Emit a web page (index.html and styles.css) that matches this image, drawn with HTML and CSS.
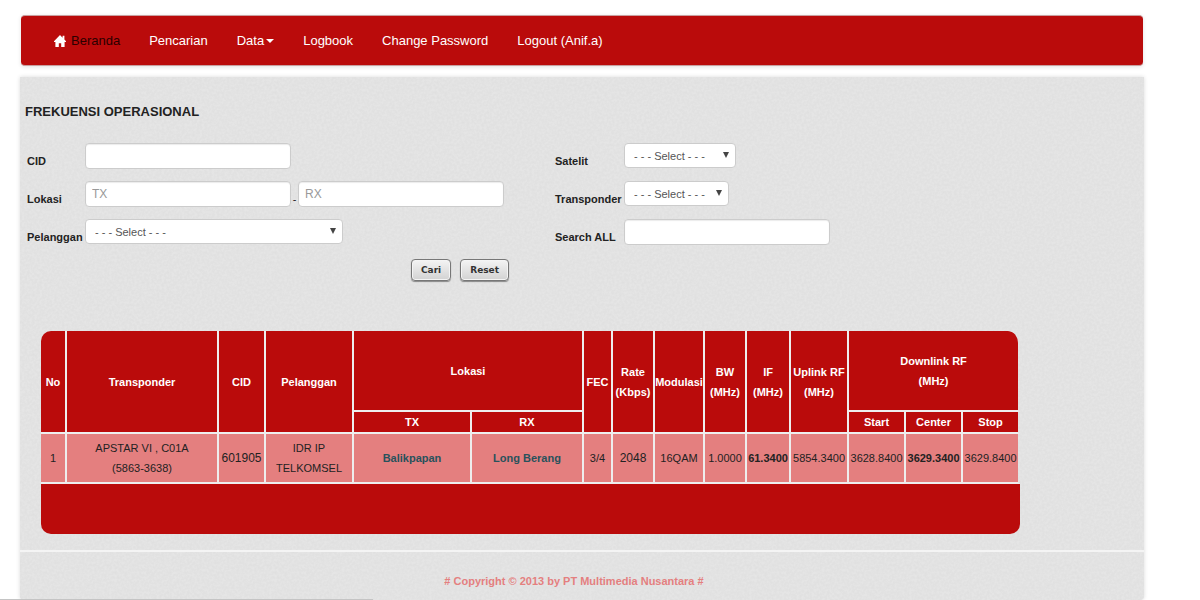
FILE: index.html
```html
<!DOCTYPE html>
<html lang="id">
<head>
<meta charset="utf-8">
<title>Frekuensi Operasional</title>
<link rel="stylesheet" href="styles.css">
</head>
<body>
<nav class="navbar">
  <a class="nav-link active" href="#">
    <svg class="home" viewBox="0 0 12 12" aria-hidden="true"><path d="M6 0 L8.6 2.7 V.8 H10.4 V4.6 L12 6.3 V7 H10.6 V12 H7.2 V8.2 H4.8 V12 H1.4 V7 H0 V6.3 Z"/></svg>
    Beranda</a>
  <a class="nav-link" href="#">Pencarian</a>
  <a class="nav-link dropdown" href="#">Data<span class="caret"></span></a>
  <a class="nav-link" href="#">Logbook</a>
  <a class="nav-link" href="#">Change Password</a>
  <a class="nav-link" href="#">Logout (Anif.a)</a>
</nav>

<main class="panel">
  <h1 class="title">FREKUENSI OPERASIONAL</h1>

  <form class="search">
    <div class="fields">
      <label class="label" for="cid">CID</label>
      <div class="control"><input class="text" id="cid" type="text"></div>
      <label class="label" for="satelit">Satelit</label>
      <div class="control"><select class="select medium" id="satelit"><option>- - - Select - - -</option></select></div>

      <label class="label" for="tx">Lokasi</label>
      <div class="control">
        <input class="text" id="tx" type="text" placeholder="TX">
        <span class="dash">-</span>
        <input class="text" type="text" placeholder="RX" aria-label="RX">
      </div>
      <label class="label" for="transponder">Transponder</label>
      <div class="control"><select class="select small" id="transponder"><option>- - - Select - - -</option></select></div>

      <label class="label" for="pelanggan">Pelanggan</label>
      <div class="control"><select class="select large" id="pelanggan"><option>- - - Select - - -</option></select></div>
      <label class="label" for="all">Search ALL</label>
      <div class="control"><input class="text" id="all" type="text"></div>
    </div>
    <div class="actions">
      <button class="button" type="button">Cari</button>
      <button class="button" type="reset">Reset</button>
    </div>
  </form>

  <table class="grid">
    <colgroup>
      <col class="w-no"><col class="w-transponder"><col class="w-cid"><col class="w-pelanggan">
      <col class="w-tx"><col class="w-rx"><col class="w-fec"><col class="w-rate"><col class="w-mod">
      <col class="w-bw"><col class="w-if"><col class="w-uplink">
      <col class="w-down"><col class="w-down"><col class="w-down">
    </colgroup>
    <thead>
      <tr class="head-main">
        <th rowspan="2" class="first">No</th>
        <th rowspan="2">Transponder</th>
        <th rowspan="2">CID</th>
        <th rowspan="2">Pelanggan</th>
        <th colspan="2">Lokasi</th>
        <th rowspan="2">FEC</th>
        <th rowspan="2">Rate<br>(Kbps)</th>
        <th rowspan="2">Modulasi</th>
        <th rowspan="2">BW<br>(MHz)</th>
        <th rowspan="2">IF<br>(MHz)</th>
        <th rowspan="2">Uplink RF<br>(MHz)</th>
        <th colspan="3" class="last">Downlink RF<br>(MHz)</th>
      </tr>
      <tr class="head-sub">
        <th>TX</th><th>RX</th><th>Start</th><th>Center</th><th class="last">Stop</th>
      </tr>
    </thead>
    <tbody>
      <tr class="row">
        <td>1</td>
        <td>APSTAR VI , C01A<br>(5863-3638)</td>
        <td class="code">601905</td>
        <td>IDR IP<br>TELKOMSEL</td>
        <td><a class="place" href="#">Balikpapan</a></td>
        <td><a class="place" href="#">Long Berang</a></td>
        <td>3/4</td>
        <td class="code">2048</td>
        <td>16QAM</td>
        <td>1.0000</td>
        <td class="strong">61.3400</td>
        <td>5854.3400</td>
        <td>3628.8400</td>
        <td class="strong">3629.3400</td>
        <td class="last">3629.8400</td>
      </tr>
    </tbody>
    <tfoot>
      <tr><td class="foot" colspan="15"></td></tr>
    </tfoot>
  </table>

  <footer class="copyright"># Copyright © 2013 by PT Multimedia Nusantara #</footer>
</main>
<div class="status"></div>
</body>
</html>
```
FILE: styles.css
```css
* { box-sizing: border-box; }

body {
  margin: 0;
  padding: 15px 56px 0 20px;
  background: #fff;
  color: #222;
  font: 11px/20px "Liberation Sans", Arial, sans-serif;
  overflow: hidden;
}

.navbar {
  display: flex;
  align-items: center;
  gap: 29px;
  height: 51px;
  margin: 0 1px 11px;
  padding: 0 33px;
  background: #ba0b0b;
  border: 1px solid #c9a0a0;
  border-width: 1px 0;
  border-radius: 4px;
  box-shadow: 0 1px 4px rgba(0, 0, 0, .12);
}

.nav-link {
  display: flex;
  align-items: center;
  color: #fff;
  font-size: 13px;
  text-decoration: none;
}

.nav-link.active { gap: 5px; color: #2b0000; }
.home { width: 12px; height: 12px; fill: #fff; }
.dropdown { gap: 2px; }

.caret {
  border: 4px solid transparent;
  border-top-color: #fff;
  border-bottom: 0;
}

.panel {
  padding-top: 25px;
  background-color: #e5e5e5;
  background-image: url("data:image/svg+xml,%3Csvg xmlns='http://www.w3.org/2000/svg' width='160' height='160'%3E%3Cfilter id='n'%3E%3CfeTurbulence type='fractalNoise' baseFrequency='.4' numOctaves='2' stitchTiles='stitch'/%3E%3CfeColorMatrix values='0 0 0 0 0 0 0 0 0 0 0 0 0 0 0 .05 0 0 0 -.015'/%3E%3C/filter%3E%3Crect width='160' height='160' filter='url(%23n)'/%3E%3C/svg%3E");
  border-radius: 0 0 4px 4px;
  box-shadow: 0 0 4px rgba(0, 0, 0, .15);
}

.title {
  margin: 0;
  padding-left: 5px;
  color: #222;
  font-size: 13px;
  line-height: 20px;
}

.fields {
  display: grid;
  grid-template-columns: 58px 470px 69px 1fr;
  grid-auto-rows: 38px;
  padding: 21px 0 0 7px;
}

.label {
  padding-top: 8px;
  font-weight: bold;
}

.control {
  display: flex;
  align-items: flex-start;
}

.text, .select {
  height: 26px;
  border: 1px solid #ccc;
  border-radius: 4px;
  background-color: #fff;
  color: #555;
  font: 12px/20px "Liberation Sans", Arial, sans-serif;
}

.text {
  width: 206px;
  padding: 0 6px;
  box-shadow: inset 0 1px 1px rgba(0, 0, 0, .08);
}

.text::placeholder { color: #999; }

.dash {
  width: 7px;
  padding-top: 8px;
  text-align: center;
}

.select {
  height: 25px;
  padding: 0 9px;
  font-size: 11px;
  appearance: none;
  background-image: url("data:image/svg+xml,%3Csvg xmlns='http://www.w3.org/2000/svg' width='6' height='6'%3E%3Cpath d='M0 0H6L3 6Z' fill='%23444'/%3E%3C/svg%3E");
  background-repeat: no-repeat;
  background-position: right 6px top 8px;
}

.small { width: 105px; }
.medium { width: 112px; }
.large { width: 258px; }

.actions {
  display: flex;
  gap: 9px;
  padding: 2px 0 0 391px;
}

.button {
  height: 22px;
  padding: 0 9px;
  border: 1px solid #777;
  border-radius: 4px;
  background: linear-gradient(#f4f4f4, #d2d2d2);
  box-shadow: inset 0 0 0 1px #f4f4f4, 0 1px 1px rgba(0, 0, 0, .4);
  color: #333;
  font: bold 9px/18px "DejaVu Sans", "Noto Sans", sans-serif;
}

.grid {
  width: 979px;
  margin: 50px 0 0 21px;
  border-spacing: 0;
  table-layout: fixed;
  text-align: center;
}

.w-no { width: 26px; }
.w-transponder { width: 152px; }
.w-cid { width: 47px; }
.w-pelanggan { width: 88px; }
.w-tx { width: 118px; }
.w-rx { width: 112px; }
.w-fec { width: 29px; }
.w-rate, .w-bw { width: 42px; }
.w-mod { width: 50px; }
.w-if { width: 44px; }
.w-uplink { width: 58px; }
.w-down { width: 57px; }

.grid th, .row td {
  padding: 0;
  border: solid #eee;
  border-width: 0 2px 2px 0;
  background-clip: padding-box;
  white-space: nowrap;
}

.grid th {
  background-color: #ba0b0b;
  color: #fff;
}

.head-main { height: 81px; }
.head-sub { height: 22px; }

.row { height: 50px; }
.row td { background-color: #e47f7f; }
.row .code { font-size: 12px; }
.row .strong { font-weight: bold; }
.grid .last { border-right-color: transparent; }
.grid .first { border-top-left-radius: 10px; }
.head-main .last { border-top-right-radius: 12px; }

.place {
  color: #28525c;
  font-weight: bold;
  text-decoration: none;
}

.foot {
  height: 50px;
  padding: 0;
  background: #ba0b0b;
  border-radius: 0 0 10px 10px;
}

.copyright {
  margin-top: 16px;
  padding: 19px 0 9px;
  border-top: 2px solid #f4f4f4;
  color: #e47f7f;
  font-weight: bold;
  text-align: center;
  padding-right: 16px;
}

.status {
  position: fixed;
  left: 0;
  bottom: 0;
  width: 373px;
  height: 1px;
  background: #c4c4c4;
}
```
